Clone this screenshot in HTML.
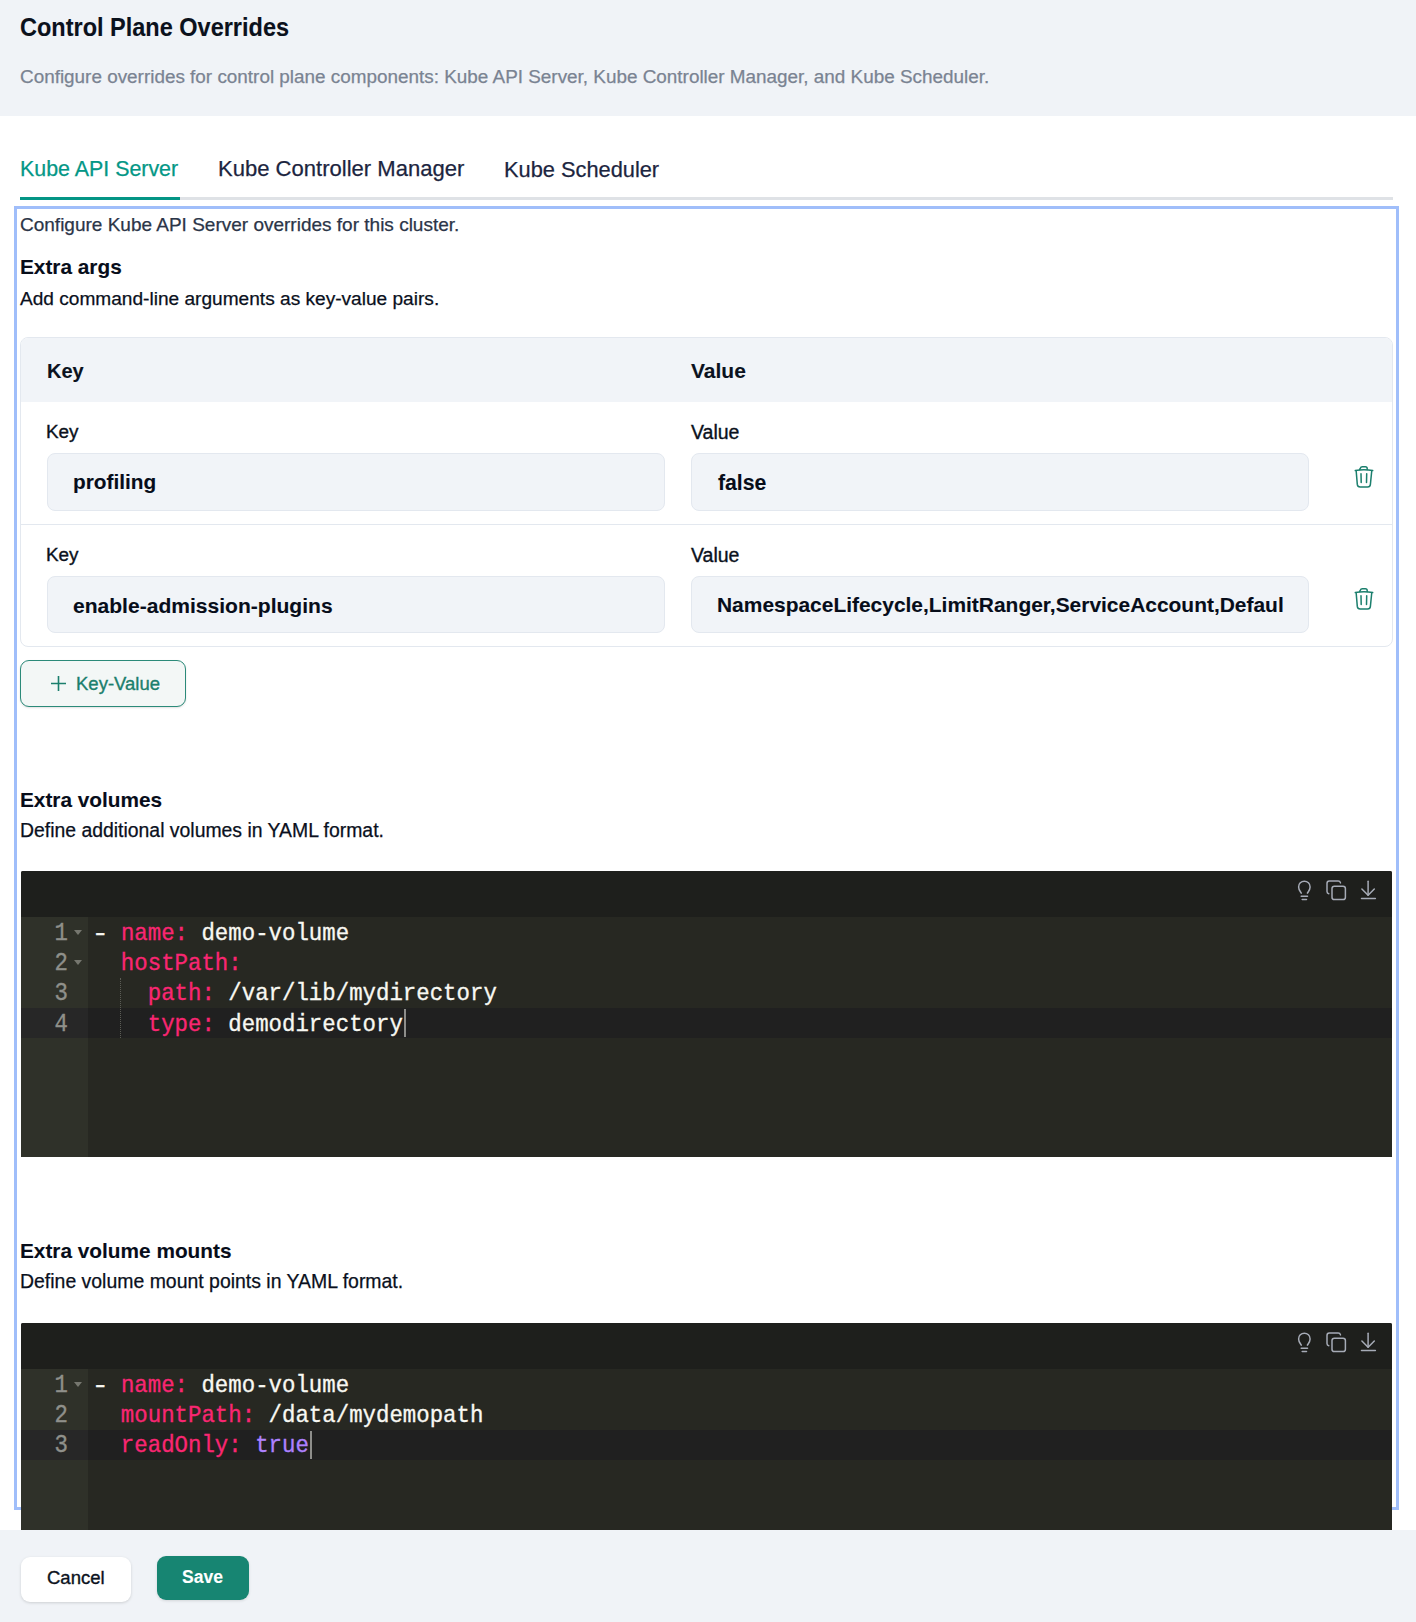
<!DOCTYPE html>
<html>
<head>
<meta charset="utf-8">
<style>
*{margin:0;padding:0;box-sizing:border-box}
html,body{width:1416px;height:1622px;overflow:hidden;background:#fff}
body{position:relative;font-family:"Liberation Sans",sans-serif;color:#0b1220}
.a{position:absolute}
.t{position:absolute;line-height:1;white-space:nowrap}
.t{-webkit-text-stroke:0.25px currentColor}
.t[style*="font-weight:700"]{-webkit-text-stroke:0.1px currentColor}
.t.m{-webkit-text-stroke:0.35px currentColor}
.hdr{left:0;top:0;width:1416px;height:116px;background:#f0f3f7}
.ftr{left:0;top:1530px;width:1416px;height:92px;background:#f0f3f7}
.tabline{left:20px;top:197px;width:1373px;height:3px;background:#dfe2e6}
.tabact{left:20px;top:197px;width:160px;height:3px;background:#039585}
.focus{left:14px;top:206px;width:1385px;height:1304px;border:3px solid #a0befa}
.tbl{left:20px;top:337px;width:1373px;height:310px;border:1px solid #e3e8ef;border-radius:8px;overflow:hidden}
.thead{left:0;top:0;width:100%;height:64px;background:#f1f4f8}
.rowdiv{left:0;top:186px;width:100%;height:1px;background:#e3e8ef}
.inp{position:absolute;background:#f1f4f8;border:1px solid #e3e8ef;border-radius:8px}
.btn-kv{left:20px;top:660px;width:166px;height:47px;border:1px solid #2b8a79;border-radius:9px;background:#f3f7f6;box-shadow:0 1px 2px rgba(0,0,0,.12)}
.ed{position:absolute;left:21px;width:1371px;background:#272822;overflow:hidden;border-radius:2px 2px 0 0}
.tb{position:absolute;left:0;top:0;width:100%;height:46px;background:#1e1f1c}
.gut{position:absolute;left:0;top:46px;width:67px;bottom:0;background:#2f3129}
.ln{position:absolute;left:0;width:100%;height:30.3px}
.code{font-family:"Liberation Mono",monospace;font-size:22.38px;white-space:pre;-webkit-text-stroke:0.3px currentColor}
.dash{display:inline-block;transform:scaleX(1.3);transform-origin:60% 0}
.k{color:#f92672}.s{color:#f8f8f2}.c{color:#ae81ff}
.num{position:absolute;color:#8f908a;text-align:right;width:46px;left:0}
.fold{position:absolute;left:53px;width:0;height:0;border-left:4px solid transparent;border-right:4px solid transparent;border-top:5px solid #76776f}
.cancel{left:21px;top:1557px;width:110px;height:45px;background:#fff;border-radius:9px;box-shadow:0 1px 3px rgba(0,0,0,.15)}
.save{left:157px;top:1556px;width:92px;height:44px;background:#178572;border-radius:9px;box-shadow:0 1px 3px rgba(0,0,0,.12)}
</style>
</head>
<body>
<!-- header -->
<div class="a hdr"></div>
<div class="t" style="left:20px;top:16.6px;font-size:23.5px;transform:scaleY(1.08);transform-origin:0 19.9px;font-weight:700;color:#0b111c">Control Plane Overrides</div>
<div class="t" style="left:20px;top:67.8px;font-size:18.9px;color:#7a8392">Configure overrides for control plane components: Kube API Server, Kube Controller Manager, and Kube Scheduler.</div>

<!-- tabs -->
<div class="t" style="left:20px;top:158.7px;font-size:21.4px;color:#049786">Kube API Server</div>
<div class="t" style="left:218px;top:158.4px;font-size:22.05px;color:#1c2540">Kube Controller Manager</div>
<div class="t" style="left:504px;top:158.6px;font-size:21.8px;color:#1c2540">Kube Scheduler</div>
<div class="a tabline"></div>
<div class="a tabact"></div>

<!-- focus outline -->
<div class="a focus"></div>

<div class="t" style="left:20px;top:214.7px;font-size:19px;color:#2b3548">Configure Kube API Server overrides for this cluster.</div>
<div class="t" style="left:20px;top:257.2px;font-size:20.8px;font-weight:700;color:#070d1a">Extra args</div>
<div class="t" style="left:20px;top:288.6px;font-size:19.1px;color:#0a1020">Add command-line arguments as key-value pairs.</div>

<!-- table -->
<div class="a tbl">
  <div class="a thead"></div>
  <div class="a rowdiv"></div>
</div>
<div class="t" style="left:47px;top:361.1px;font-size:20px;font-weight:700;color:#0b1220">Key</div>
<div class="t" style="left:691px;top:360.3px;font-size:21px;font-weight:700;color:#0b1220">Value</div>

<div class="t m" style="left:46px;top:422.9px;font-size:18.9px;color:#0b1220">Key</div>
<div class="t m" style="left:691px;top:422.6px;font-size:19.5px;color:#0b1220">Value</div>
<div class="inp" style="left:47px;top:453px;width:618px;height:58px"></div>
<div class="inp" style="left:691px;top:453px;width:618px;height:58px"></div>
<div class="t" style="left:73px;top:472.2px;font-size:20.8px;font-weight:700;color:#070d1a">profiling</div>
<div class="t" style="left:718px;top:471.8px;font-size:21.2px;font-weight:700;color:#070d1a">false</div>

<div class="t m" style="left:46px;top:545.9px;font-size:18.9px;color:#0b1220">Key</div>
<div class="t m" style="left:691px;top:545.6px;font-size:19.5px;color:#0b1220">Value</div>
<div class="inp" style="left:47px;top:576px;width:618px;height:57px"></div>
<div class="inp" style="left:691px;top:576px;width:618px;height:57px"></div>
<div class="t" style="left:73px;top:594.8px;font-size:21.05px;font-weight:700;color:#070d1a">enable-admission-plugins</div>
<div class="t" style="left:717px;top:594.8px;font-size:20.95px;font-weight:700;color:#070d1a">NamespaceLifecycle,LimitRanger,ServiceAccount,Defaul</div>

<!-- trash icons -->
<svg class="a" style="left:1350px;top:462px" width="28" height="30" viewBox="1350 462 28 30" fill="none" stroke="#1b7f6d" stroke-width="1.5" stroke-linecap="round" stroke-linejoin="round">
  <path d="M1355.3 470.6 Q1364 468.8 1372.7 470.6"/>
  <path d="M1359.7 469.6 L1360.2 468.4 C1360.6 467.3 1361.2 466.8 1362.4 466.8 H1365.4 C1366.6 466.8 1367.2 467.4 1367.2 468.6 V469.6"/>
  <path d="M1356.2 471.3 L1357.3 484.4 C1357.5 486.1 1358.6 487 1360.2 487 H1367.6 C1369.2 487 1370.2 486.1 1370.4 484.4 L1371.7 471.3"/>
  <path d="M1361 473.8 L1361.2 482.6"/><path d="M1366.7 473.8 L1366.5 482.6"/>
</svg>
<svg class="a" style="left:1350px;top:584px" width="28" height="30" viewBox="1350 462 28 30" fill="none" stroke="#1b7f6d" stroke-width="1.5" stroke-linecap="round" stroke-linejoin="round">
  <path d="M1355.3 470.6 Q1364 468.8 1372.7 470.6"/>
  <path d="M1359.7 469.6 L1360.2 468.4 C1360.6 467.3 1361.2 466.8 1362.4 466.8 H1365.4 C1366.6 466.8 1367.2 467.4 1367.2 468.6 V469.6"/>
  <path d="M1356.2 471.3 L1357.3 484.4 C1357.5 486.1 1358.6 487 1360.2 487 H1367.6 C1369.2 487 1370.2 486.1 1370.4 484.4 L1371.7 471.3"/>
  <path d="M1361 473.8 L1361.2 482.6"/><path d="M1366.7 473.8 L1366.5 482.6"/>
</svg>
<!-- add key-value button -->
<div class="a btn-kv"></div>
<svg class="a" style="left:50px;top:675px" width="17" height="17" viewBox="0 0 17 17" stroke="#1b7f6d" stroke-width="1.6"><path d="M8.5 1V16M1 8.5H16"/></svg>
<div class="t m" style="left:76px;top:674.8px;font-size:18.5px;color:#1b7f6d">Key-Value</div>

<!-- extra volumes -->
<div class="t" style="left:20px;top:790.1px;font-size:20.8px;font-weight:700;color:#070d1a">Extra volumes</div>
<div class="t" style="left:20px;top:821.2px;font-size:19.4px;color:#0a1020">Define additional volumes in YAML format.</div>

<!-- extra volume mounts -->
<div class="t" style="left:20px;top:1241.4px;font-size:20.8px;font-weight:700;color:#070d1a">Extra volume mounts</div>
<div class="t" style="left:20px;top:1272.2px;font-size:19.45px;color:#0a1020">Define volume mount points in YAML format.</div>

<!-- EDITORS -->
<div class="ed" style="top:871px;height:286px">
<div class="tb"></div>
<div class="gut"></div>
<div class="a" style="left:0;top:136.90px;width:67px;height:30.3px;background:#272727"></div>
<div class="a" style="left:67px;top:136.90px;width:1304px;height:30.3px;background:#202020"></div>
<div class="a" style="left:99px;top:106.60px;width:0;height:60.60px;border-left:1px dotted #5b5c55"></div>
<div class="a code num" style="top:47.60px;left:0;width:47px;line-height:30.3px;transform:scaleY(1.14);transform-origin:0 22.1px">1</div>
<div class="fold" style="top:58.80px"></div>
<div class="a code" style="left:73px;top:47.60px;line-height:30.3px;transform:scaleY(1.09);transform-origin:0 21.1px"><span class="s"><span class="dash">-</span> </span><span class="k">name:</span><span class="s"> demo-volume</span></div>
<div class="a code num" style="top:77.90px;left:0;width:47px;line-height:30.3px;transform:scaleY(1.14);transform-origin:0 22.1px">2</div>
<div class="fold" style="top:89.10px"></div>
<div class="a code" style="left:73px;top:77.90px;line-height:30.3px;transform:scaleY(1.09);transform-origin:0 21.1px"><span class="s">  </span><span class="k">hostPath:</span></div>
<div class="a code num" style="top:108.20px;left:0;width:47px;line-height:30.3px;transform:scaleY(1.14);transform-origin:0 22.1px">3</div>
<div class="a code" style="left:73px;top:108.20px;line-height:30.3px;transform:scaleY(1.09);transform-origin:0 21.1px"><span class="s">    </span><span class="k">path:</span><span class="s"> /var/lib/mydirectory</span></div>
<div class="a code num" style="top:138.50px;left:0;width:47px;line-height:30.3px;transform:scaleY(1.14);transform-origin:0 22.1px">4</div>
<div class="a code" style="left:73px;top:138.50px;line-height:30.3px;transform:scaleY(1.09);transform-origin:0 21.1px"><span class="s">    </span><span class="k">type:</span><span class="s"> demodirectory</span></div>
<div class="a" style="left:383.39px;top:137.90px;width:1.6px;height:28.3px;background:#8d8d8a"></div>

<svg class="a" style="left:1269px;top:5px" width="100" height="30" viewBox="1290 876 100 30" fill="none" stroke="#a6abb6" stroke-width="1.5" stroke-linecap="round" stroke-linejoin="round">
  <path d="M1301.3 893.2 C1300.6 891.8 1298.6 889.9 1298.6 886.9 A5.75 5.75 0 0 1 1310.1 886.9 C1310.1 889.9 1308.1 891.8 1307.4 893.2"/>
  <path d="M1301.2 896.2 H1307.5"/><path d="M1302.2 899.5 H1306.5"/>
  <rect x="1332" y="886.2" width="13.4" height="13.4" rx="2.4"/>
  <path d="M1328.8 893.7 C1327.6 893.5 1327 892.8 1327 891.6 V883.4 C1327 882 1327.9 881.1 1329.3 881.1 H1338.2 C1339.4 881.1 1340.2 881.8 1340.5 882.9"/>
  <path d="M1368.1 881.3 V895.2"/><path d="M1361.9 889 L1368.1 895.2 L1374.3 889"/><path d="M1361.5 898.6 H1375.4"/>
</svg>
</div>
<div class="ed" style="top:1323px;height:230px">
<div class="tb"></div>
<div class="gut"></div>
<div class="a" style="left:0;top:106.60px;width:67px;height:30.3px;background:#272727"></div>
<div class="a" style="left:67px;top:106.60px;width:1304px;height:30.3px;background:#202020"></div>
<div class="a code num" style="top:47.60px;left:0;width:47px;line-height:30.3px;transform:scaleY(1.14);transform-origin:0 22.1px">1</div>
<div class="fold" style="top:58.80px"></div>
<div class="a code" style="left:73px;top:47.60px;line-height:30.3px;transform:scaleY(1.09);transform-origin:0 21.1px"><span class="s"><span class="dash">-</span> </span><span class="k">name:</span><span class="s"> demo-volume</span></div>
<div class="a code num" style="top:77.90px;left:0;width:47px;line-height:30.3px;transform:scaleY(1.14);transform-origin:0 22.1px">2</div>
<div class="a code" style="left:73px;top:77.90px;line-height:30.3px;transform:scaleY(1.09);transform-origin:0 21.1px"><span class="s">  </span><span class="k">mountPath:</span><span class="s"> /data/mydemopath</span></div>
<div class="a code num" style="top:108.20px;left:0;width:47px;line-height:30.3px;transform:scaleY(1.14);transform-origin:0 22.1px">3</div>
<div class="a code" style="left:73px;top:108.20px;line-height:30.3px;transform:scaleY(1.09);transform-origin:0 21.1px"><span class="s">  </span><span class="k">readOnly:</span><span class="s"> </span><span class="c">true</span></div>
<div class="a" style="left:289.38px;top:107.60px;width:1.6px;height:28.3px;background:#8d8d8a"></div>

<svg class="a" style="left:1269px;top:5px" width="100" height="30" viewBox="1290 876 100 30" fill="none" stroke="#a6abb6" stroke-width="1.5" stroke-linecap="round" stroke-linejoin="round">
  <path d="M1301.3 893.2 C1300.6 891.8 1298.6 889.9 1298.6 886.9 A5.75 5.75 0 0 1 1310.1 886.9 C1310.1 889.9 1308.1 891.8 1307.4 893.2"/>
  <path d="M1301.2 896.2 H1307.5"/><path d="M1302.2 899.5 H1306.5"/>
  <rect x="1332" y="886.2" width="13.4" height="13.4" rx="2.4"/>
  <path d="M1328.8 893.7 C1327.6 893.5 1327 892.8 1327 891.6 V883.4 C1327 882 1327.9 881.1 1329.3 881.1 H1338.2 C1339.4 881.1 1340.2 881.8 1340.5 882.9"/>
  <path d="M1368.1 881.3 V895.2"/><path d="M1361.9 889 L1368.1 895.2 L1374.3 889"/><path d="M1361.5 898.6 H1375.4"/>
</svg>
</div>
<!-- footer -->
<div class="a ftr"></div>
<div class="a cancel"></div>
<div class="t m" style="left:47px;top:1569.3px;font-size:18.5px;color:#0b1220">Cancel</div>
<div class="a save"></div>
<div class="t" style="left:182px;top:1569.2px;font-size:17.5px;font-weight:700;color:#fff">Save</div>
</body>
</html>
